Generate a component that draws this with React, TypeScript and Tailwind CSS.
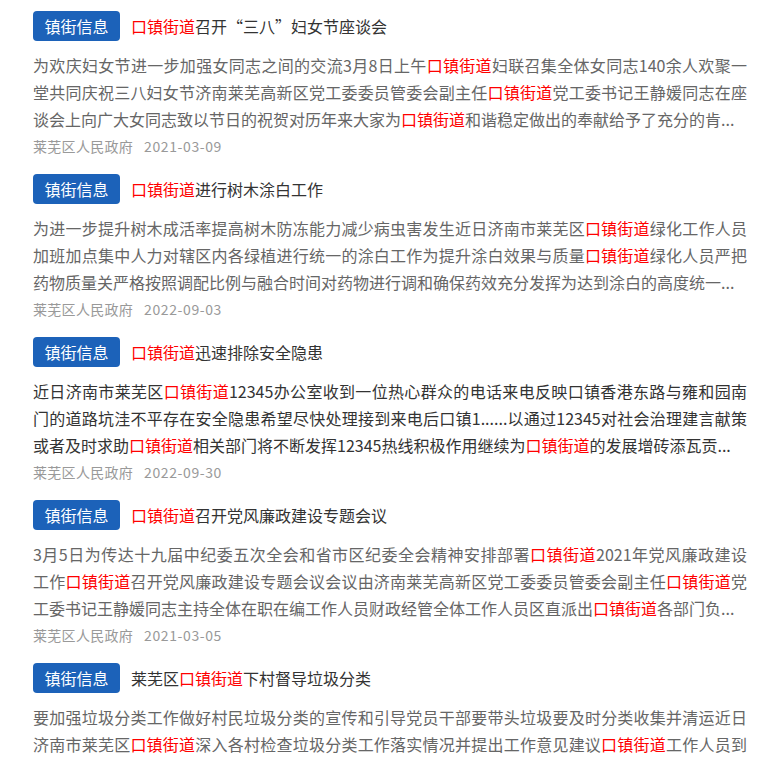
import React from "react";

interface NewsItem {
  title: string;
  body: string;
  source: string;
  date: string;
}

const KEY = "口镇街道";

// bodies come pre-truncated with "..." like the source list
const items: NewsItem[] = [
  {
    title: "口镇街道召开“三八”妇女节座谈会",
    body: "为欢庆妇女节进一步加强女同志之间的交流3月8日上午口镇街道妇联召集全体女同志140余人欢聚一堂共同庆祝三八妇女节济南莱芜高新区党工委委员管委会副主任口镇街道党工委书记王静媛同志在座谈会上向广大女同志致以节日的祝贺对历年来大家为口镇街道和谐稳定做出的奉献给予了充分的肯...",
    source: "莱芜区人民政府",
    date: "2021-03-09",
  },
  {
    title: "口镇街道进行树木涂白工作",
    body: "为进一步提升树木成活率提高树木防冻能力减少病虫害发生近日济南市莱芜区口镇街道绿化工作人员加班加点集中人力对辖区内各绿植进行统一的涂白工作为提升涂白效果与质量口镇街道绿化人员严把药物质量关严格按照调配比例与融合时间对药物进行调和确保药效充分发挥为达到涂白的高度统一...",
    source: "莱芜区人民政府",
    date: "2022-09-03",
  },
  {
    title: "口镇街道迅速排除安全隐患",
    body: "近日济南市莱芜区口镇街道12345办公室收到一位热心群众的电话来电反映口镇香港东路与雍和园南门的道路坑洼不平存在安全隐患希望尽快处理接到来电后口镇1......以通过12345对社会治理建言献策或者及时求助口镇街道相关部门将不断发挥12345热线积极作用继续为口镇街道的发展增砖添瓦贡...",
    source: "莱芜区人民政府",
    date: "2022-09-30",
  },
  {
    title: "口镇街道召开党风廉政建设专题会议",
    body: "3月5日为传达十九届中纪委五次全会和省市区纪委全会精神安排部署口镇街道2021年党风廉政建设|工作|口镇街道召开党风廉政建设专题会议会议由济南莱芜高新区党工委委员管委会副主任口镇街道党工委书记王静媛同志主持全体在职在编工作人员财政经管全体工作人员区直派出口镇街道各部门负...",
    source: "莱芜区人民政府",
    date: "2021-03-05",
  },
  {
    title: "莱芜区口镇街道下村督导垃圾分类",
    body: "要加强垃圾分类工作做好村民垃圾分类的宣传和引导党员干部要带头垃圾要及时分类收集并清运近日济南市莱芜区口镇街道深入各村检查垃圾分类工作落实情况并提出工作意见建议口镇街道工作人员到各村实地查看垃圾分类收集点设置情况并与村干部交流...",
    source: "莱芜区人民政府",
    date: "2021-03-05",
  },
];

// red for every occurrence of the street name
const Red: React.FC<{ text: string }> = ({ text }) => {
  const parts = text.split(KEY);
  return (
    <>
      {parts.map((p, i) => (
        <React.Fragment key={i}>
          {p}
          {i < parts.length - 1 && <span className="text-[#ff0000]">{KEY}</span>}
        </React.Fragment>
      ))}
    </>
  );
};

// "|word|" marks a run that must not be split across lines
const Body: React.FC<{ text: string }> = ({ text }) => {
  const chunks = text.split("|");
  return (
    <>
      {chunks.map((c, i) =>
        i % 2 === 1 ? (
          <span key={i} className="whitespace-nowrap">
            <Red text={c} />
          </span>
        ) : (
          <Red key={i} text={c} />
        )
      )}
    </>
  );
};

export default function App() {
  return (
    <div className="w-[768px] min-h-[760px] bg-white pl-[33px] pr-[21px] font-['Noto_Sans_CJK_SC',sans-serif]">
      {items.map((item, idx) => (
        <div key={idx} className="pt-[11px] pb-[7px]">
          <div className="flex items-center h-[30px]">
            <span className="flex items-center justify-center h-[30px] w-[87px] rounded-[4px] bg-[#1c62b9] text-white text-[16px] leading-none">
              镇街信息
            </span>
            <span className="ml-[11px] text-[16px] text-[#333] leading-none">
              <Red text={item.title} />
            </span>
          </div>
          <p
            className={
              "mt-[11px] text-[16px] leading-[27px] text-justify line-clamp-3 " +
              (idx === 2 ? "text-[#333]" : "text-[#666]")
            }
          >
            <Body text={item.body} />
          </p>
          <div className="mt-[3px] h-[20px] flex items-center gap-[11px] text-[14px] leading-[20px] text-[#999]">
            <span className="tracking-[0.3px]">{item.source}</span>
            <span className="tracking-[0.6px]">{item.date}</span>
          </div>
        </div>
      ))}
    </div>
  );
}
